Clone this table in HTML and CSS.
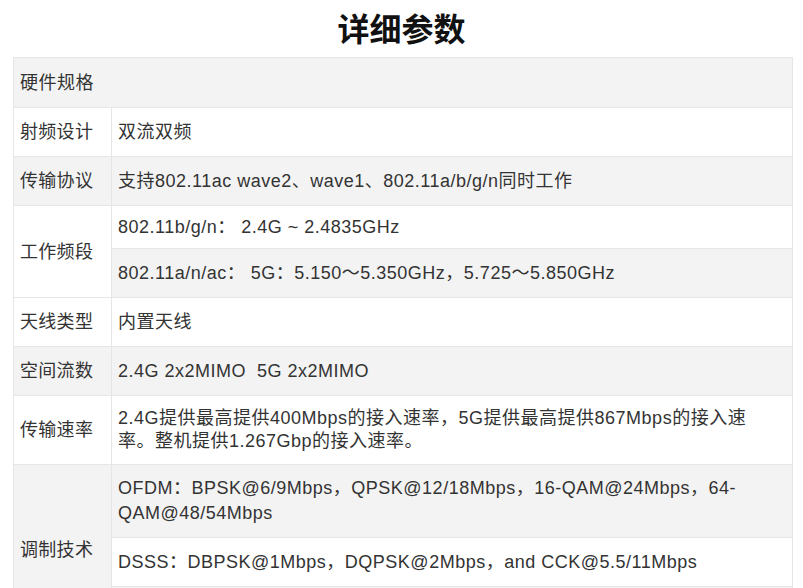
FILE: index.html
```html
<!DOCTYPE html>
<html lang="zh-CN">
<head>
<meta charset="utf-8">
<title>详细参数</title>
<link rel="stylesheet" href="styles.css">
</head>
<body>
<h2 class="title">详细参数</h2>
<table class="spec">
  <tbody>
    <tr><td class="head" colspan="2">硬件规格</td></tr>
    <tr><td class="label">射频设计</td><td class="value">双流双频</td></tr>
    <tr><td class="label">传输协议</td><td class="value">支持802.11ac wave2、wave1、802.11a/b/g/n同时工作</td></tr>
    <tr><td class="label" rowspan="2">工作频段</td><td class="value short">802.11b/g/n： 2.4G ~ 2.4835GHz</td></tr>
    <tr><td class="value">802.11a/n/ac： 5G：5.150～5.350GHz，5.725～5.850GHz</td></tr>
    <tr><td class="label">天线类型</td><td class="value">内置天线</td></tr>
    <tr><td class="label">空间流数</td><td class="value">2.4G 2x2MIMO&nbsp;&nbsp;5G 2x2MIMO</td></tr>
    <tr><td class="label">传输速率</td><td class="value multi">2.4G提供最高提供400Mbps的接入速率，5G提供最高提供867Mbps的接入速率。整机提供1.267Gbp的接入速率。</td></tr>
    <tr><td class="label" rowspan="3">调制技术</td><td class="value multi wide">OFDM：BPSK@6/9Mbps，QPSK@12/18Mbps，16-QAM@24Mbps，64-QAM@48/54Mbps</td></tr>
    <tr><td class="value">DSSS：DBPSK@1Mbps，DQPSK@2Mbps，and CCK@5.5/11Mbps</td></tr>
    <tr><td class="value">&nbsp;</td></tr>
  </tbody>
</table>
</body>
</html>
```

FILE: styles.css
```css
html, body {
  margin: 0;
  padding: 0;
  background: #fff;
}
body {
  font-family: "Liberation Sans", "Noto Sans CJK SC", sans-serif;
  color: #333;
}
.title {
  margin: 0 0 3px 0;
  height: 54px;
  line-height: 54px;
  text-align: center;
  font-size: 32px;
  font-weight: bold;
  color: #111;
  font-family: "Noto Sans CJK SC", sans-serif;
}
.spec {
  margin: 0 0 0 13px;
  width: 780px;
  border-collapse: collapse;
  font-size: 18px;
  letter-spacing: 0.5px;
}
.spec td {
  border: 1px solid #e6e6e6;
  padding: 12px 8px 12px 6px;
  line-height: 24px;
  vertical-align: middle;
  text-align: left;
}
.spec tr:nth-child(odd) {
  background: #f3f3f3;
}
.spec tr:nth-child(even) {
  background: #fff;
}
.spec td.head {
  padding-top: 13px;
  padding-bottom: 12px;
}
.spec td.label {
  width: 83px;
  white-space: nowrap;
  letter-spacing: 0.3px;
}
.spec td.value {
  padding-right: 30px;
}
.spec td.short {
  padding-top: 9px;
  padding-bottom: 9px;
}
.spec td.multi {
  line-height: 23px;
  padding-top: 11px;
  padding-bottom: 11px;
}
.spec td.multi.wide {
  line-height: 25px;
}
```
